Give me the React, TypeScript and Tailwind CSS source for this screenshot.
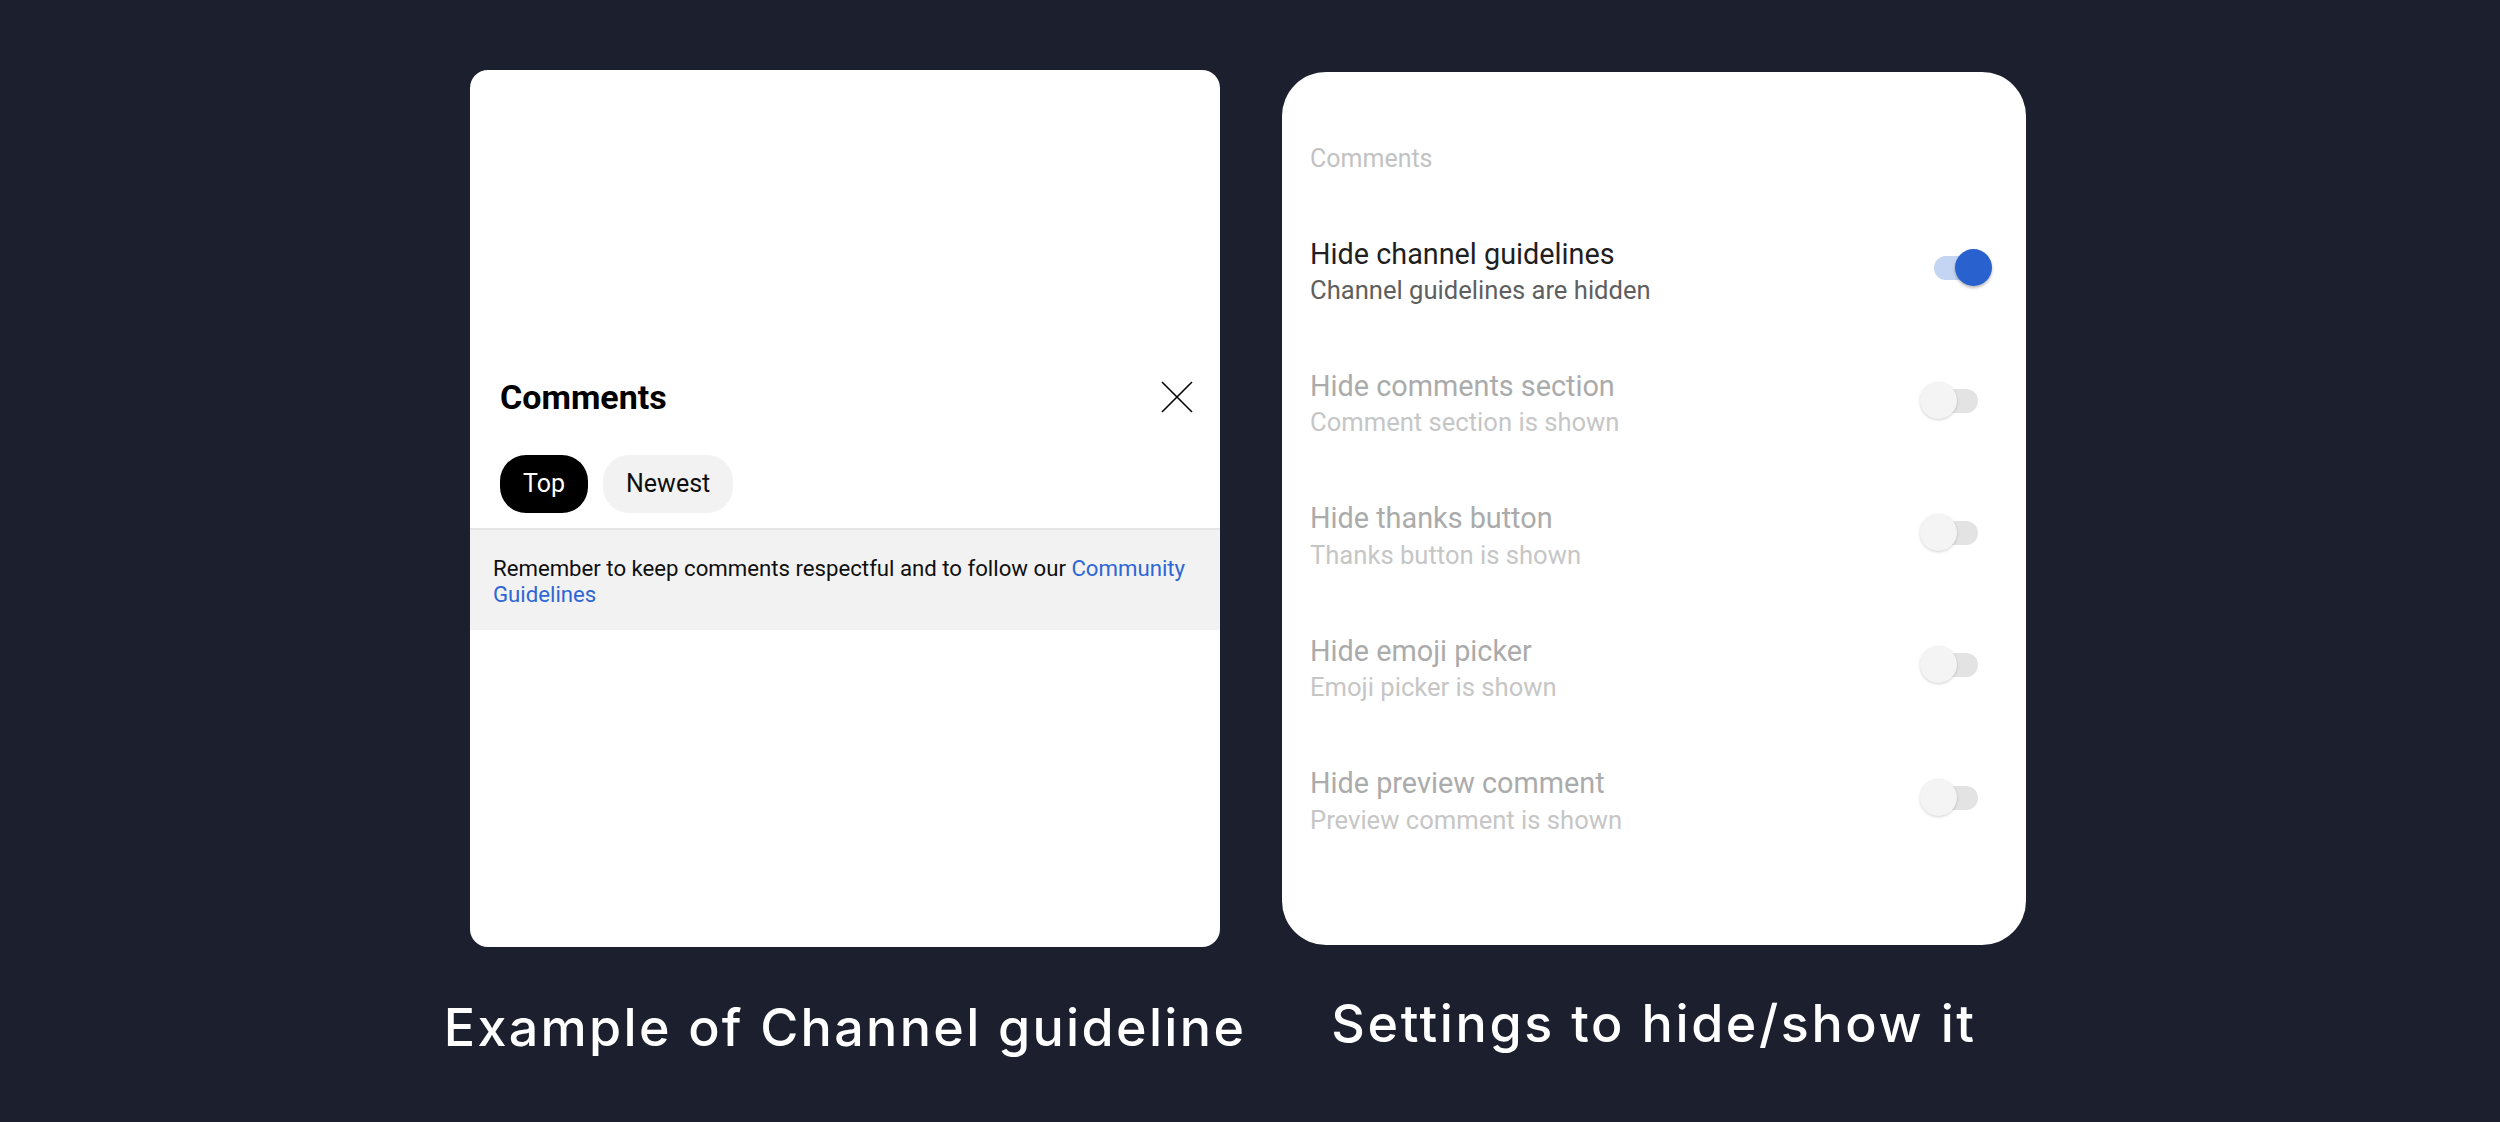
import React from "react";

const rows = [
  { title: "Hide channel guidelines", sub: "Channel guidelines are hidden", on: true },
  { title: "Hide comments section", sub: "Comment section is shown", on: false },
  { title: "Hide thanks button", sub: "Thanks button is shown", on: false },
  { title: "Hide emoji picker", sub: "Emoji picker is shown", on: false },
  { title: "Hide preview comment", sub: "Preview comment is shown", on: false },
];

function Toggle({ on }: { on: boolean }) {
  return (
    <div className="relative w-[72px] h-[40px] shrink-0 mt-[-6px]">
      <div
        className={
          on
            ? "absolute left-[14px] top-[8px] w-[44px] h-[24px] rounded-full bg-[#c3d5f3]"
            : "absolute left-[14px] top-[8px] w-[44px] h-[24px] rounded-full bg-[#e3e3e3]"
        }
      />
      <div
        className={
          on
            ? "absolute right-0 top-[1px] w-[37px] h-[37px] rounded-full bg-[#2962cf] shadow-[0_2px_3px_rgba(0,0,0,0.28)]"
            : "absolute left-0 top-[1px] w-[37px] h-[37px] rounded-full bg-[#f4f4f4] shadow-[0_1px_3px_rgba(0,0,0,0.18)]"
        }
      />
    </div>
  );
}

export default function App() {
  return (
    <div className="min-h-screen w-full bg-[#1b1f2e] flex items-start pl-[470px] pt-[70px] gap-[62px]" style={{ fontFamily: "Roboto, 'Liberation Sans', sans-serif" }}>
      {/* Left column */}
      <div className="flex flex-col items-center w-[750px]">
        <div className="w-[750px] h-[877px] bg-white rounded-[18px] overflow-hidden flex flex-col pt-[307px]">
          <div className="flex items-center justify-between h-[40px] pl-[30px] pr-[27px]">
            <div className="text-[34px] leading-[40px] font-bold text-black">Comments</div>
            <svg width="32" height="32" viewBox="0 0 32 32" className="text-black">
              <path d="M1 1 L31 31 M31 1 L1 31" stroke="currentColor" strokeWidth="1.6" fill="none" />
            </svg>
          </div>
          <div className="flex mt-[38px] pl-[30px] gap-[15px]">
            <div className="h-[58px] px-[23px] rounded-[26px] bg-black text-white text-[25px] flex items-center">Top</div>
            <div className="h-[58px] px-[23px] rounded-[26px] bg-[#f2f2f2] text-[#0f0f0f] text-[25px] flex items-center">Newest</div>
          </div>
          <div className="mt-[15px] border-t-2 border-[#e5e5e5] bg-[#f2f2f2] pl-[23px] pr-[20px] pt-[25px] pb-[23px] text-[22.2px] leading-[26px] text-[#0f0f0f]">
            <p>
              Remember to keep comments respectful and to follow our <span className="text-[#2f66d6]">Community Guidelines</span>
            </p>
          </div>
        </div>
        <div className="mt-[50px] text-white text-[52px] leading-[61px] font-medium tracking-[0.045em] whitespace-nowrap" style={{ fontFamily: "Inter, sans-serif" }}>
          Example of Channel guideline
        </div>
      </div>

      {/* Right column */}
      <div className="flex flex-col items-center w-[744px] mt-[2px]">
        <div className="w-[744px] h-[873px] bg-white rounded-[44px] pt-[72px] pl-[28px] pr-[34px] flex flex-col">
          <div className="text-[25px] leading-[30px] text-[#c2c2c2]">Comments</div>
          <div className="mt-[62.5px] flex flex-col gap-[62.9px]">
            {rows.map((r) => (
              <div key={r.title} className="flex items-center justify-between">
                <div className="flex flex-col">
                  <div className={r.on ? "text-[28.8px] leading-[34px] text-[#1f1f1f]" : "text-[28.8px] leading-[34px] text-[#ababab]"}>{r.title}</div>
                  <div className={r.on ? "mt-[3.5px] text-[25.6px] leading-[32px] text-[#5f5f5f]" : "mt-[3.5px] text-[25.6px] leading-[32px] text-[#c6c6c6]"}>{r.sub}</div>
                </div>
                <Toggle on={r.on} />
              </div>
            ))}
          </div>
        </div>
        <div className="mt-[48px] text-white text-[52px] leading-[61px] font-medium tracking-[0.05em] whitespace-nowrap" style={{ fontFamily: "Inter, sans-serif" }}>
          Settings to hide/show it
        </div>
      </div>
    </div>
  );
}
